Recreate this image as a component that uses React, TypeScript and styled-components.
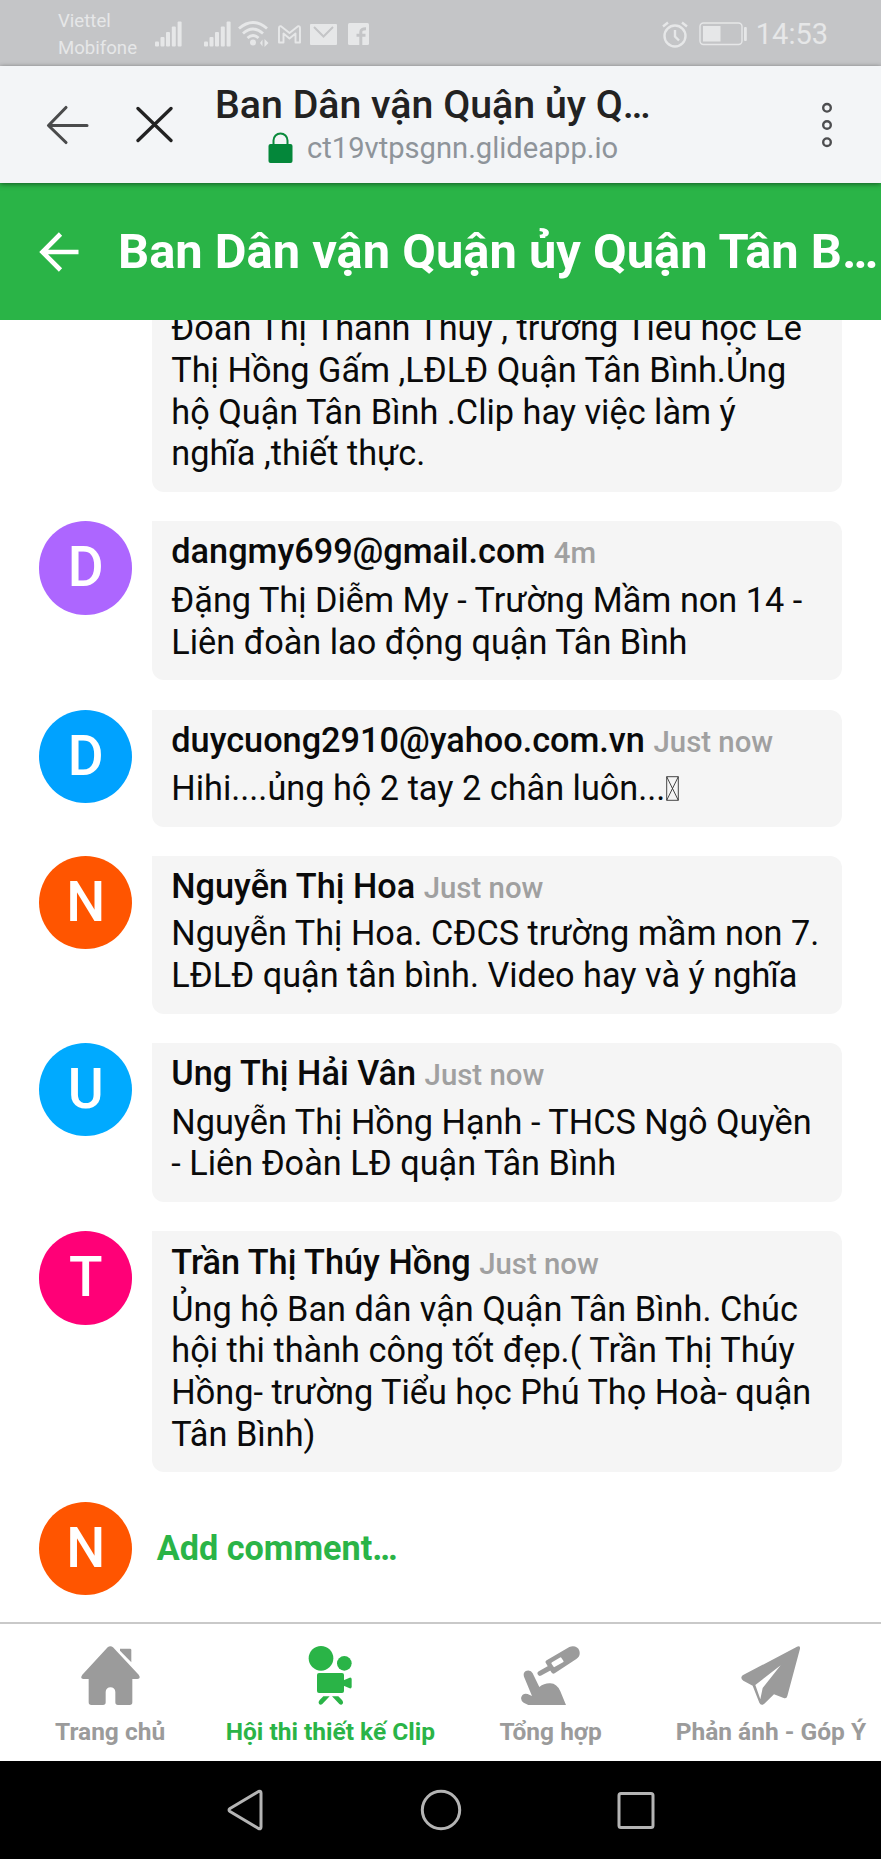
import React from 'react';
import styled, { createGlobalStyle } from 'styled-components';

const GREEN = '#2ab447';
const GREY = '#9b9b9b';

const GlobalStyle = createGlobalStyle`
  * { box-sizing: border-box; }
  body {
    margin: 0;
    background: #fff;
    font-family: Roboto, 'Liberation Sans', sans-serif;
  }
  svg { display: block; flex: none; }
`;

const Screen = styled.div`
  display: flex;
  flex-direction: column;
  width: 881px;
  height: 1859px;
  overflow: hidden;
  background: #fff;
`;

/* ---------- Phone status bar ---------- */

const StatusBar = styled.header`
  flex: none;
  display: flex;
  align-items: center;
  justify-content: space-between;
  height: 66px;
  padding: 2px 53px 0 58px;
  background: #c4c5c7;
  color: #e6e7e8;
`;

const StatusGroup = styled.div`
  display: flex;
  align-items: center;
`;

const Carriers = styled.div`
  width: 97px;
  padding-top: 2px;
  font-size: 18.6px;
  line-height: 27px;
  white-space: nowrap;
`;

const StatusIcon = styled.svg<{ $gap: number }>`
  margin-right: ${(p) => p.$gap}px;
`;

const Clock = styled.span`
  font-size: 29px;
  line-height: 34px;
`;

const Signal = ({ gap }: { gap: number }) => (
  <StatusIcon $gap={gap} width="27" height="26" viewBox="0 0 27 26" fill="currentColor">
    <rect x="0" y="20.5" width="4" height="5" rx="1" />
    <rect x="5.5" y="16" width="4" height="9.5" rx="1" />
    <rect x="11" y="11" width="4" height="14.5" rx="1" />
    <rect x="16.8" y="5.5" width="4" height="20" rx="1" />
    <rect x="22.6" y="0.5" width="4" height="25" rx="1" />
  </StatusIcon>
);

/* ---------- In-app browser bar ---------- */

const BrowserBar = styled.div`
  flex: none;
  display: flex;
  align-items: center;
  height: 117px;
  padding: 0 49px 0 45px;
  background: #f3f5f7;
  position: relative;
  box-shadow: 0 1px 5px rgba(0, 0, 0, 0.5);
`;

const BrowserActions = styled.div`
  display: flex;
  align-items: center;
  gap: 45px;
  width: 170px;
`;

const PageInfo = styled.div`
  flex: 1;
  min-width: 0;
`;

const PageTitle = styled.div`
  font-size: 39.3px;
  font-weight: 500;
  line-height: 46px;
  color: #222;
  white-space: nowrap;
`;

const Address = styled.div`
  display: flex;
  align-items: center;
  gap: 14px;
  height: 40px;
  padding-left: 53px;
  font-size: 29.15px;
  line-height: 40px;
  color: #8e949a;
`;

/* ---------- App header ---------- */

const AppBar = styled.div`
  flex: none;
  display: flex;
  align-items: center;
  gap: 38px;
  height: 137px;
  padding-left: 39px;
  background: ${GREEN};
  color: #fff;
`;

const AppTitle = styled.h1`
  margin: 0;
  font-size: 48.85px;
  font-weight: 700;
  line-height: 58px;
  white-space: nowrap;
`;

/* ---------- Comments ---------- */

const Comments = styled.main`
  flex: none;
  display: flex;
  flex-direction: column;
  gap: 29.4px;
  height: 1302px;
  padding: 0 39px;
  overflow: hidden;
`;

const CommentRow = styled.div<{ $clipped?: boolean }>`
  flex: none;
  display: flex;
  gap: 19.7px;
  margin-top: ${(p) => (p.$clipped ? '-11.9px' : '0')};
  padding-left: ${(p) => (p.$clipped ? '113px' : '0')};
`;

const Avatar = styled.div<{ $color: string }>`
  flex: none;
  width: 93.3px;
  height: 93.3px;
  border-radius: 50%;
  background: ${(p) => p.$color};
  color: #fff;
  font-size: 55px;
  font-weight: 500;
  line-height: 93px;
  text-align: center;
`;

const Bubble = styled.div<{ $clipped?: boolean }>`
  width: 690px;
  padding: ${(p) => (p.$clipped ? '0' : '9.2px')} 0 16.8px 19.3px;
  border-radius: 0 12px 12px 12px;
  background: #f5f5f5;
  color: #0a0a0a;
  font-size: 34.27px;
`;

const Author = styled.div<{ $tight?: boolean }>`
  height: 42px;
  margin-bottom: ${(p) => (p.$tight ? '6.1px' : '7.4px')};
  font-weight: 500;
  line-height: 42px;
  white-space: nowrap;
`;

const Time = styled.span`
  font-size: 29.37px;
  color: #a0a0a0;
`;

const Message = styled.div`
  line-height: 41.75px;
  white-space: pre;
`;

const MissingGlyph = styled.svg`
  && { display: inline-block; }
  margin-left: 1px;
  vertical-align: -1px;
`;

const AddRow = styled.div`
  flex: none;
  display: flex;
  align-items: center;
  gap: 24.500px;
`;

const AddLabel = styled.span`
  color: ${GREEN};
  font-size: 34.2px;
  font-weight: 700;
  line-height: 40px;
`;

type Comment = {
  name: string;
  time: string;
  color: string;
  initial: string;
  text: string;
  tight?: boolean;
  missingGlyph?: boolean;
};

const comments: Comment[] = [
  {
    name: 'dangmy699@gmail.com',
    time: '4m',
    color: '#ad66ff',
    initial: 'D',
    text: 'Đặng Thị Diễm My - Trường Mầm non 14 -\nLiên đoàn lao động quận Tân Bình',
  },
  {
    name: 'duycuong2910@yahoo.com.vn',
    time: 'Just now',
    color: '#00a2ff',
    initial: 'D',
    text: 'Hihi....ủng hộ 2 tay 2 chân luôn...',
    missingGlyph: true,
  },
  {
    name: 'Nguyễn Thị Hoa',
    time: 'Just now',
    color: '#ff5500',
    initial: 'N',
    text: 'Nguyễn Thị Hoa. CĐCS trường mầm non 7.\nLĐLĐ quận tân bình. Video hay và ý nghĩa',
    tight: true,
  },
  {
    name: 'Ung Thị Hải Vân',
    time: 'Just now',
    color: '#00aaff',
    initial: 'U',
    text: 'Nguyễn Thị Hồng Hạnh - THCS Ngô Quyền\n- Liên Đoàn LĐ quận Tân Bình',
  },
  {
    name: 'Trần Thị Thúy Hồng',
    time: 'Just now',
    color: '#ff0077',
    initial: 'T',
    text: 'Ủng hộ Ban dân vận Quận Tân Bình. Chúc\nhội thi thành công tốt đẹp.( Trần Thị Thúy\nHồng- trường Tiểu học Phú Thọ Hoà- quận\nTân Bình)',
    tight: true,
  },
];

/* ---------- Tab bar ---------- */

const TabBar = styled.nav`
  flex: none;
  display: grid;
  grid-template-columns: repeat(4, 1fr);
  height: 139px;
  border-top: 2px solid #c9c9c9;
  background: #fff;
`;

const Tab = styled.div<{ $active?: boolean }>`
  display: flex;
  flex-direction: column;
  align-items: center;
  gap: 12px;
  padding-top: 22px;
  color: ${(p) => (p.$active ? GREEN : GREY)};
  font-size: 24.5px;
  font-weight: 700;
  line-height: 30px;
  white-space: nowrap;
`;

const TabIcon = ({ children }: { children: React.ReactNode }) => (
  <svg width="59" height="59" viewBox="0 0 177 177" fill="currentColor">
    {children}
  </svg>
);

/* ---------- System navigation ---------- */

const SystemNav = styled.footer`
  flex: none;
  display: grid;
  grid-template-columns: repeat(3, 195.7px);
  justify-content: center;
  justify-items: center;
  align-items: center;
  height: 98px;
  background: #000;
`;

export default function App() {
  return (
    <>
      <GlobalStyle />
      <Screen>
        <StatusBar>
          <StatusGroup>
            <Carriers>
              Viettel
              <br />
              Mobifone
            </Carriers>
            <Signal gap={22} />
            <Signal gap={7} />
            <StatusIcon $gap={9} width="31" height="26" viewBox="0 0 31 26" fill="none" stroke="currentColor" strokeWidth="2.8">
              <path d="M1 7.5Q15 -4.5 29 7.5" />
              <path d="M5 12.5Q15 3.5 25 12.5" />
              <path d="M9.500 17Q15 12 20.500 17" />
              <circle cx="15" cy="21.500" r="3" fill="currentColor" stroke="none" />
              <path d="M24.500 18.500V25.500L22 22ZM26.500 18L30.500 22L26.500 26Z" fill="currentColor" stroke="none" />
            </StatusIcon>
            <StatusIcon $gap={9} width="23" height="19" viewBox="0 0 23 19" fill="none" stroke="currentColor" strokeWidth="1.9" strokeLinejoin="round">
              <path d="M1 17.500V3Q1 1 3 1.300L11.500 8L20 1.300Q22 1 22 3V17.500H17.500V8.500L11.500 13.500L5.500 8.500V17.500Z" />
            </StatusIcon>
            <StatusIcon $gap={11} width="27" height="21" viewBox="0 0 27 21">
              <rect width="27" height="21" rx="1" fill="currentColor" />
              <path d="M4 3L13.500 12.500L23 3" fill="none" stroke="#c4c5c7" strokeWidth="2" />
            </StatusIcon>
            <StatusIcon $gap={0} width="21" height="22" viewBox="0 0 21 22">
              <rect width="21" height="22" rx="1.500" fill="currentColor" />
              <path d="M12.800 22V14M12.800 14V9Q12.800 5.600 18 5.700M8.500 12.300H17.500" fill="none" stroke="#c4c5c7" strokeWidth="3" />
            </StatusIcon>
          </StatusGroup>
          <StatusGroup>
            <StatusIcon $gap={11} width="26" height="27" viewBox="0 0 26 27" fill="none" stroke="currentColor" strokeWidth="2.400">
              <circle cx="13" cy="15" r="10.500" />
              <path d="M13 9V15.500L17 19.500M1 5.500L6 1.500M25 5.500L20 1.500" />
            </StatusIcon>
            <StatusIcon $gap={8} width="49" height="24" viewBox="0 0 49 24">
              <rect x="1" y="1" width="42" height="21.500" rx="3.500" fill="none" stroke="currentColor" strokeWidth="1.400" />
              <rect x="4" y="4" width="17.500" height="15.500" fill="currentColor" />
              <rect x="45" y="5" width="2.800" height="14" rx="1" fill="currentColor" />
            </StatusIcon>
            <Clock>14:53</Clock>
          </StatusGroup>
        </StatusBar>

        <BrowserBar>
          <BrowserActions>
            <svg width="45" height="40" viewBox="0 0 45 40" fill="none" stroke="#4a4b4c" strokeWidth="3.100" strokeLinecap="round" strokeLinejoin="round">
              <path d="M42 20.500H4M21 2.500L3.500 20.500L21 37.500" />
            </svg>
            <svg width="38" height="38" viewBox="0 0 38 38" fill="none" stroke="#222" strokeWidth="3.300" strokeLinecap="round">
              <path d="M3 2.500L36 34.500M36 2.500L3 34.500" />
            </svg>
          </BrowserActions>
          <PageInfo>
            <PageTitle>Ban Dân vận Quận ủy Q…</PageTitle>
            <Address>
              <svg width="25" height="32" viewBox="0 0 25 32">
                <path d="M5.500 14V8.500A7 7 0 0 1 19.500 8.500V14" fill="none" stroke="#0a8a3c" strokeWidth="2" />
                <rect x="0.500" y="12" width="24" height="19" rx="2" fill="#04873a" />
              </svg>
              ct19vtpsgnn.glideapp.io
            </Address>
          </PageInfo>
          <svg width="10" height="46" viewBox="0 0 10 46" fill="none" stroke="#4d4e50" strokeWidth="2.400">
            <circle cx="5" cy="5.800" r="3.800" />
            <circle cx="5" cy="23" r="3.800" />
            <circle cx="5" cy="40.200" r="3.800" />
          </svg>
        </BrowserBar>

        <AppBar>
          <svg width="41" height="40" viewBox="0 0 41 40" fill="none" stroke="currentColor" strokeWidth="4.600">
            <path d="M39.500 20H4M21.500 2L3.500 20L21.500 38" />
          </svg>
          <AppTitle>Ban Dân vận Quận ủy Quận Tân B…</AppTitle>
        </AppBar>

        <Comments>
          <CommentRow $clipped>
            <Bubble $clipped>
              <Message>
                {'Đoàn Thị Thanh Thúy , trường Tiểu học Lê\nThị Hồng Gấm ,LĐLĐ Quận Tân Bình.Ủng\nhộ Quận Tân Bình .Clip hay việc làm ý\nnghĩa ,thiết thực.'}
              </Message>
            </Bubble>
          </CommentRow>
          {comments.map((c) => (
            <CommentRow key={c.name}>
              <Avatar $color={c.color}>{c.initial}</Avatar>
              <Bubble>
                <Author $tight={c.tight}>
                  {c.name} <Time>{c.time}</Time>
                </Author>
                <Message>
                  {c.text}
                  {c.missingGlyph && (
                    <MissingGlyph width="13" height="25" viewBox="0 0 13 25" fill="none" stroke="#333" strokeWidth="0.900">
                      <path d="M0.700 0.700H12.300V24.300H0.700ZM0.700 0.700L12.300 24.300M12.300 0.700L0.700 24.300" />
                    </MissingGlyph>
                  )}
                </Message>
              </Bubble>
            </CommentRow>
          ))}
          <AddRow>
            <Avatar $color="#ff5500">N</Avatar>
            <AddLabel>Add comment…</AddLabel>
          </AddRow>
        </Comments>

        <TabBar>
          <Tab>
            <TabIcon>
              <path d="M80 4Q88 -3 96 4L173 86Q181 98 169 99H154V169Q154 177 146 177H111Q103 177 103 169V138A14.500 14.500 0 0 0 74 138V169Q74 177 66 177H31Q23 177 23 169V99H7Q-4 98 4 86Z" />
              <path d="M117 8H147Q151 8 151 12V49L117 14Z" />
            </TabIcon>
            Trang chủ
          </Tab>
          <Tab $active>
            <TabIcon>
              <circle cx="60" cy="37" r="37" />
              <circle cx="130" cy="52" r="22" />
              <rect x="48" y="81" width="81" height="60" rx="6" />
              <path d="M128 103L146 95Q152 94 152 100V122Q152 128 146 127L128 119Z" />
              <path d="M67 151H86L64 174Q58 179 54 173Q51 168 56 162Z" />
              <path d="M112 151H93L115 174Q121 179 125 173Q128 168 123 162Z" />
            </TabIcon>
            Hội thi thiết kế Clip
          </Tab>
          <Tab>
            <TabIcon>
              <path d="M9 92Q5 78 17 74Q30 71 35 82L55 123Q70 111 88 112Q108 113 118 136L135 177H22L8 170Q-2 164 1 153Q6 140 20 144L33 150Z" />
              <path d="M57 82L86 66" fill="none" stroke="currentColor" strokeWidth="15" strokeLinecap="round" />
              <path fillRule="evenodd" d="M77 43L145 3C157 -3 172 2 175 14C178 25 175 33 166 39L101 82Q95 85 91 79L74 50Q72 46 77 43ZM93 49Q90 51 92 54L99 64L126 49Q129 47 127 44L121 35Q119 33 116 35Z" />
            </TabIcon>
            Tổng hợp
          </Tab>
          <Tab>
            <TabIcon>
              <path fillRule="evenodd" d="M168 2Q178 -2 177 8L139 150Q137 159 128 156L99 145L70 173Q60 181 55 170L35 119L7 104Q-4 96 5 88ZM119 58L43 117L58 160L65 126Z" />
            </TabIcon>
            Phản ánh - Góp Ý
          </Tab>
        </TabBar>

        <SystemNav>
          <svg width="36" height="42" viewBox="0 0 36 42" fill="none" stroke="#b4b4b4" strokeWidth="3" strokeLinejoin="round">
            <path d="M31.500 2.500Q34 1.500 34 4V38Q34 40.500 31.500 39.500L3 22.500Q1 21 3 19.500Z" />
          </svg>
          <svg width="42" height="42" viewBox="0 0 42 42" fill="none" stroke="#b4b4b4" strokeWidth="3">
            <circle cx="21" cy="21" r="18.700" />
          </svg>
          <svg width="38" height="38" viewBox="0 0 38 38" fill="none" stroke="#b4b4b4" strokeWidth="3">
            <rect x="2" y="2.500" width="34" height="34" rx="2" />
          </svg>
        </SystemNav>
      </Screen>
    </>
  );
}
